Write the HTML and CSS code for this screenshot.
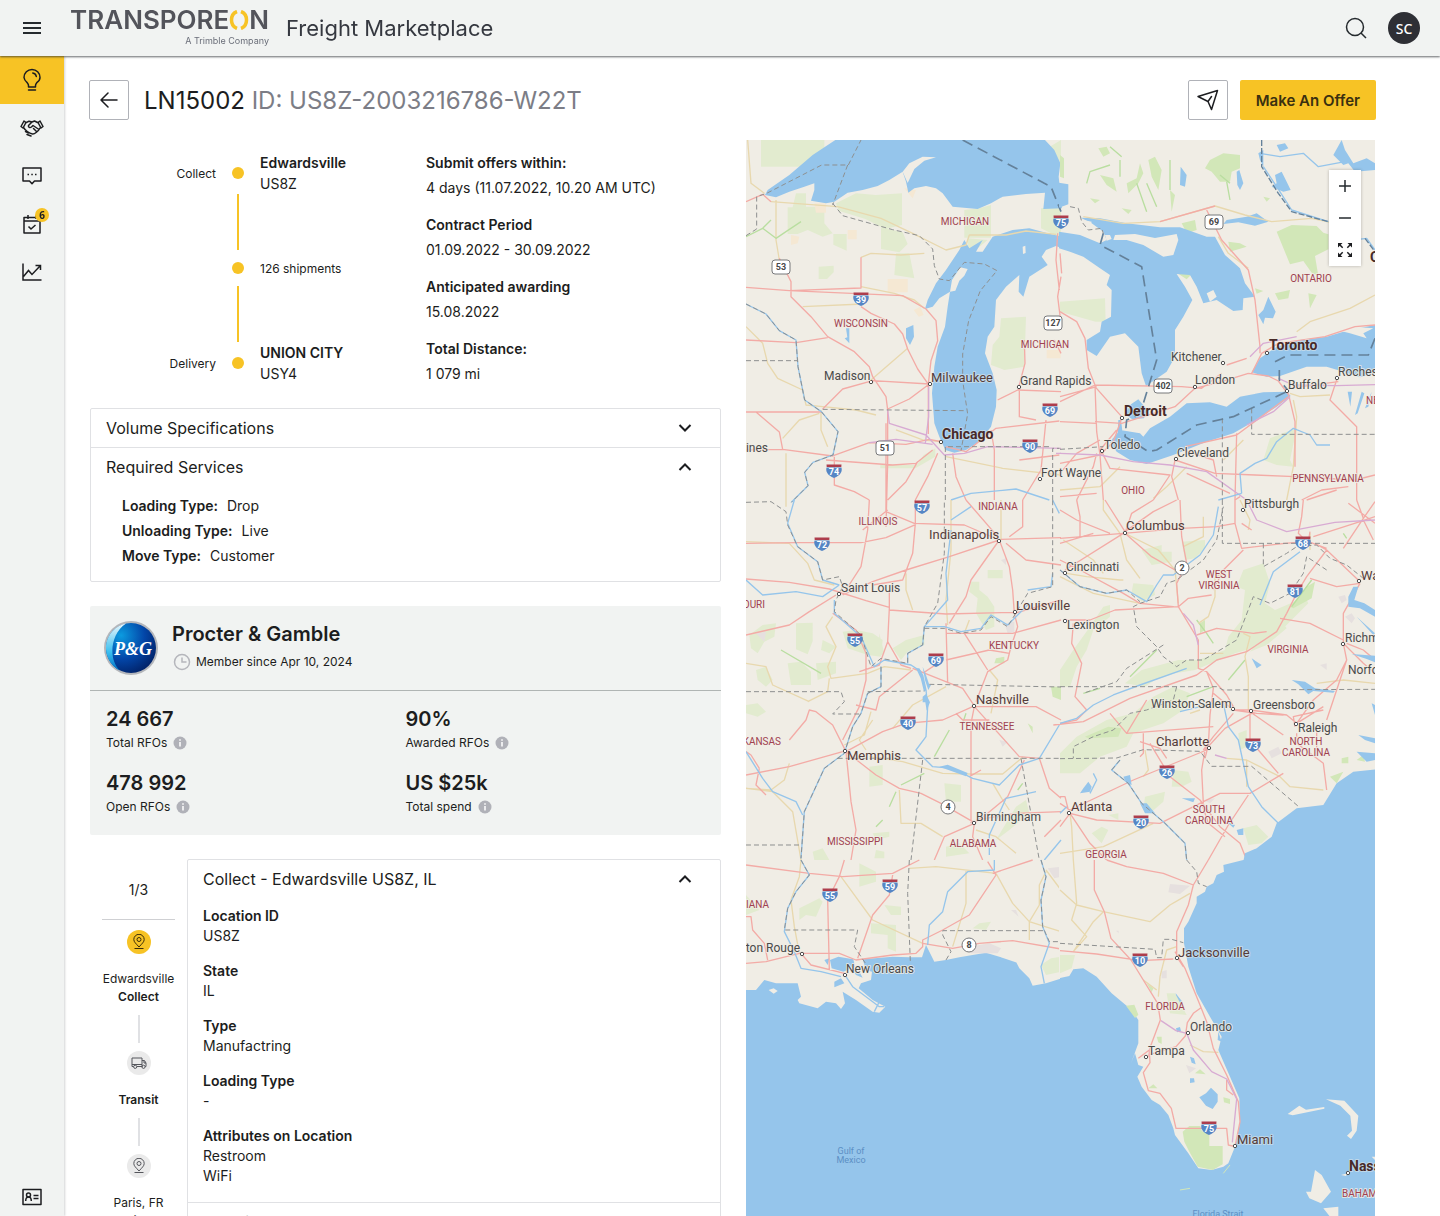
FILE: index.html
```html
<!DOCTYPE html>
<html lang="en">
<head>
<meta charset="utf-8">
<meta name="viewport" content="width=device-width, initial-scale=1">
<title>Freight Marketplace</title>
<link rel="stylesheet" href="styles.css">
</head>
<body>
<div class="app">
  <header class="topbar">
    <button class="icon-btn menu-btn" aria-label="Menu"><svg width="18" height="12" viewBox="0 0 18 12" fill="none" stroke="#252a2e" stroke-width="2"><path d="M0 1h18M0 6h18M0 11h18"/></svg></button>
    <a class="brand" href="#">
      <span class="brand-name">TRANSPORE<svg width="20" height="20" viewBox="0 0 20 20" fill="none" stroke="#f7c325" stroke-width="3.500"><path d="M8 1.500C4 3 2.500 6 2.500 10s1.500 7 5.500 8.500M12 1.500c4 1.500 5.500 4.500 5.500 8.500s-1.500 7-5.500 8.500"/></svg>N</span>
      <span class="brand-sub">A Trimble Company</span>
    </a>
    <span class="product">Freight Marketplace</span>
    <button class="icon-btn search-btn" aria-label="Search"><svg width="22" height="22" viewBox="0 0 22 22" fill="none" stroke="#252a2e" stroke-width="1.500"><circle cx="10" cy="10" r="8.500"/><path d="M16 16l5 5"/></svg></button>
    <button class="avatar" aria-label="Account">SC</button>
  </header>

  <nav class="sidebar" aria-label="Main">
    <a class="nav-item active" href="#" aria-label="Opportunities"><svg width="24" height="24" viewBox="0 0 24 24" fill="none" stroke="#1c1d20" stroke-width="1.500" stroke-linecap="round" stroke-linejoin="round"><path d="M8.500 19v-1.500c0-1.500-.6-2-1.600-3.200A7.200 7.200 0 0 1 4 9.500a8 8 0 0 1 16 0c0 2-.9 3.500-2.900 4.800-1 1.200-1.600 1.700-1.600 3.200V19zM8.500 22h7M12.800 5c2 .3 3.200 1.500 3.500 3.500"/></svg></a>
    <a class="nav-item" href="#" aria-label="Deals"><svg width="24" height="18" viewBox="0 0 24 18" fill="none" stroke="#1c1d20" stroke-width="1.500" stroke-linecap="round" stroke-linejoin="round"><path d="M4 2L1 7.500 3 9 6 3.500zM20 2l3 5.500L21 9l-3-5.500zM5.500 4L9 2.200l3 .8 2.500-1L18.500 4M3.500 8.500C5 11 9 14.500 12.500 15c2 .3 6-3 7.500-6M12 3L8.500 6.500c-.5 2 1.500 2.500 3 1.500L13 6.500l6 4M13.500 9.500l3 3M5.500 12.500l3 1.500M7 15.500l4 1.500"/></svg></a>
    <a class="nav-item" href="#" aria-label="Messages"><svg width="20" height="20" viewBox="0 0 20 20" fill="none" stroke="#1c1d20" stroke-width="1.500" stroke-linejoin="round"><path d="M1 2h18v13h-6.500L10 17.800 7.500 15H1z"/><path d="M5.500 8.500h1.500M9.300 8.500h1.500M13 8.500h1.500"/></svg></a>
    <a class="nav-item" href="#" aria-label="Tasks, 6 open"><svg width="20" height="20" viewBox="0 0 20 20" fill="none" stroke="#1c1d20" stroke-width="1.500" stroke-linejoin="round"><path d="M2 3.500h16V19H2zM2 7h16M6 1v4M14 1v4M6.500 12.500L9 15l4.500-4"/></svg><span class="badge">6</span></a>
    <a class="nav-item" href="#" aria-label="Analytics"><svg width="20" height="20" viewBox="0 0 20 20" fill="none" stroke="#1c1d20" stroke-width="1.500"><path d="M1 1.500V18h18.500M1.500 14.500l5-6 3.500 4L18 4M13.500 3.500h5V8"/></svg></a>
    <a class="nav-item nav-last" href="#" aria-label="Contacts"><svg width="20" height="18" viewBox="0 0 20 18" fill="none" stroke="#1c1d20" stroke-width="1.500" stroke-linejoin="round"><path d="M1 1.500h18v15H1z"/><circle cx="6.500" cy="7" r="2"/><path d="M3.700 13c0-3 1.300-4 2.800-4s2.800 1 2.800 4M11.500 7.500h5M11.500 10.500h5"/></svg></a>
  </nav>

  <main class="main">
    <div class="page-head">
      <button class="square-btn" aria-label="Back"><svg width="18" height="16" viewBox="0 0 18 16" fill="none" stroke="#1c1d20" stroke-width="1.500" stroke-linecap="round" stroke-linejoin="round"><path d="M17 8H1M8 1L1 8l7 7"/></svg></button>
      <h1 class="title">LN15002 <span class="title-id">ID: US8Z-2003216786-W22T</span></h1>
      <button class="square-btn" aria-label="Share"><svg width="22" height="22" viewBox="0 0 22 22" fill="none" stroke="#1c1d20" stroke-width="1.500" stroke-linejoin="round" stroke-linecap="round"><path d="M1 7.500L20.500 1.500 14.500 20.500 11 12.500zM11 12.500l3.500-5"/></svg></button>
      <button class="primary-btn">Make An Offer</button>
    </div>

    <div class="columns">
      <div class="details">
        <section class="summary">
          <div class="route">
            <div class="route-stop"><span class="route-label">Collect</span><i class="dot"></i><span class="route-place"><b>Edwardsville</b><br>US8Z</span></div>
            <div class="route-line"></div>
            <div class="route-stop middle"><span class="route-label"></span><i class="dot"></i><span class="route-note">126 shipments</span></div>
            <div class="route-line"></div>
            <div class="route-stop"><span class="route-label">Delivery</span><i class="dot"></i><span class="route-place"><b>UNION CITY</b><br>USY4</span></div>
          </div>
          <dl class="terms">
            <div><dt>Submit offers within:</dt><dd>4 days (11.07.2022, 10.20 AM UTC)</dd></div>
            <div><dt>Contract Period</dt><dd>01.09.2022 - 30.09.2022</dd></div>
            <div><dt>Anticipated awarding</dt><dd>15.08.2022</dd></div>
            <div><dt>Total Distance:</dt><dd>1 079 mi</dd></div>
          </dl>
        </section>

        <section class="accordion specs">
          <button class="acc-head" aria-expanded="false">Volume Specifications<svg width="16" height="16" viewBox="0 0 16 16" fill="none" stroke="#1c1d20" stroke-width="2"><path d="M2.500 5L8 10.500 13.500 5"/></svg></button>
          <button class="acc-head" aria-expanded="true">Required Services<svg width="16" height="16" viewBox="0 0 16 16" fill="none" stroke="#1c1d20" stroke-width="2"><path d="M2.500 11L8 5.500 13.500 11"/></svg></button>
          <dl class="services">
            <div><dt>Loading Type:</dt><dd>Drop</dd></div>
            <div><dt>Unloading Type:</dt><dd>Live</dd></div>
            <div><dt>Move Type:</dt><dd>Customer</dd></div>
          </dl>
        </section>

        <section class="company">
          <div class="company-head">
            <svg class="company-logo" width="54" height="54" viewBox="0 0 54 54">
              <defs>
                <radialGradient id="pg-ball" cx=".3" cy=".25" r=".85"><stop offset="0" stop-color="#0b9be0"/><stop offset=".55" stop-color="#0346a8"/><stop offset="1" stop-color="#011f63"/></radialGradient>
                <linearGradient id="pg-moon" x1="0" y1="0" x2="0" y2="1"><stop offset="0" stop-color="#eaf6fb"/><stop offset=".6" stop-color="#3cc0f0"/><stop offset="1" stop-color="#0072c6"/></linearGradient>
              </defs>
              <circle cx="27" cy="27" r="27" fill="#b4b6bb"/>
              <circle cx="27" cy="27" r="25" fill="url(#pg-ball)"/>
              <path d="M22 2.500A25 25 0 0 0 16 49.500C5 40 5 14 22 2.500z" fill="url(#pg-moon)"/>
              <text x="29" y="34" class="company-mark">P&amp;G</text>
            </svg>
            <div class="company-title">
              <h2 class="company-name">Procter &amp; Gamble</h2>
              <p class="since"><svg width="18" height="18" viewBox="0 0 18 18" fill="none" stroke="#b5b6bc" stroke-width="1.500"><circle cx="9" cy="9" r="7.500"/><path d="M9 4.500V9h4.500"/></svg>Member since Apr 10, 2024</p>
            </div>
          </div>
          <div class="stats">
            <div><strong>24 667</strong><span>Total RFOs <svg class="info" width="14" height="14" viewBox="0 0 14 14"><circle cx="7" cy="7" r="6.500"/><path d="M7 6v4.500M7 3.300v1.400"/></svg></span></div>
            <div><strong>90%</strong><span>Awarded RFOs <svg class="info" width="14" height="14" viewBox="0 0 14 14"><circle cx="7" cy="7" r="6.500"/><path d="M7 6v4.500M7 3.300v1.400"/></svg></span></div>
            <div><strong>478 992</strong><span>Open RFOs <svg class="info" width="14" height="14" viewBox="0 0 14 14"><circle cx="7" cy="7" r="6.500"/><path d="M7 6v4.500M7 3.300v1.400"/></svg></span></div>
            <div><strong>US $25k</strong><span>Total spend <svg class="info" width="14" height="14" viewBox="0 0 14 14"><circle cx="7" cy="7" r="6.500"/><path d="M7 6v4.500M7 3.300v1.400"/></svg></span></div>
          </div>
        </section>

        <section class="stops">
          <div class="steps">
            <p class="steps-count">1/3</p>
            <span class="step-icon current"><svg width="16" height="16" viewBox="0 0 16 16" fill="none" stroke="#3a2d08" stroke-width="1"><path d="M8 13C5 9.500 2.800 8 2.800 5.500a5.200 5.200 0 0 1 10.400 0C13.200 8 11 9.500 8 13zM3.500 14.500h9"/><circle cx="8" cy="5.500" r="2"/></svg></span>
            <p class="step-text">Edwardsville<br><b>Collect</b></p>
            <i class="step-line"></i>
            <span class="step-icon"><svg width="16" height="14" viewBox="0 0 16 14" fill="none" stroke="#55565c" stroke-width="1"><path d="M2.500 10.500H1V2h10v8.500H6M11 4.500h2.500L15 7v3.500h-.8M11 10.500h.5M1 8.500h10M13 5v2h2"/><circle cx="4.200" cy="10.800" r="1.600"/><circle cx="12.500" cy="10.800" r="1.600"/></svg></span>
            <p class="step-text"><b>Transit</b></p>
            <i class="step-line"></i>
            <span class="step-icon"><svg width="16" height="16" viewBox="0 0 16 16" fill="none" stroke="#55565c" stroke-width="1"><path d="M8 13C5 9.500 2.800 8 2.800 5.500a5.200 5.200 0 0 1 10.400 0C13.200 8 11 9.500 8 13zM3.500 14.500h9"/><circle cx="8" cy="5.500" r="2"/></svg></span>
            <p class="step-text">Paris, FR<br><b>Delivery</b></p>
          </div>
          <div class="accordion">
            <button class="acc-head" aria-expanded="true">Collect - Edwardsville US8Z, IL<svg width="16" height="16" viewBox="0 0 16 16" fill="none" stroke="#1c1d20" stroke-width="2"><path d="M2.500 11L8 5.500 13.500 11"/></svg></button>
            <dl class="location">
              <div><dt>Location ID</dt><dd>US8Z</dd></div>
              <div><dt>State</dt><dd>IL</dd></div>
              <div><dt>Type</dt><dd>Manufactring</dd></div>
              <div><dt>Loading Type</dt><dd>-</dd></div>
              <div><dt>Attributes on Location</dt><dd>Restroom</dd><dd>WiFi</dd></div>
            </dl>
            <button class="acc-head ruled" aria-expanded="false">Transit<svg width="16" height="16" viewBox="0 0 16 16" fill="none" stroke="#1c1d20" stroke-width="2"><path d="M2.500 5L8 10.500 13.500 5"/></svg></button>
          </div>
        </section>
      </div>

      <section class="map" aria-label="Route map">
        <svg class="map-canvas" viewBox="0 0 629 1076" preserveAspectRatio="xMinYMin slice">
          <defs>
            <g id="shield"><path class="shield-blue" d="M-7.500-3.500h15c1 4-1 8-7.500 10.500C-6.500 4.500-8.500.5-7.500-3.500z"/><path class="shield-red" d="M-7.500-6.500h15l-.2 2.500h-14.600z"/></g>
            <g id="plate"><rect class="plate-box" x="-9" y="-7" width="18" height="14" rx="3"/></g>
            <circle id="round-plate" class="plate-box" r="7"/>
            <circle id="town" class="town" r="1.700"/>
          </defs>

          <!-- Upper Midwest -->
          <g transform="scale(.33333)">
            <path class="park" d="M45 0h190v60l-30 20H45zM150 160h30v40h55v50l25 30-30 10-45-20-30 12h-30v-80h15zM270 190l60-30 60 5 78-5v95l-50 12-60-30-80-25zM405 262l65 15 15 35-25 25-55-10zM262 282h40v50l-40-18zM450 340h40l15 75-60-10zM218 380l45-3v20l-20 20h-25zM655 210l45-5 35-10v98h-80zM885 205l60-5v95l-60-30zM765 535l75-5-5 150-60 10-40-15 5-60 20-25zM665 295l60 5-30 25-30 5zM403 975h110l20-30 35-20v25l-60 35H403zM895 30L945 0v70z"/>
            <path class="town-area" d="M205 190h35v28h-30zM305 270h27v28h-27zM135 285l25 5-5 20-20 5zM425 417h60v40h-60zM503 510l20-10 10 25-15 5zM475 145l35 5-10 25zM902 630h42v25h-42z"/>
            <path class="water" d="M57 165L65 150 130 105 200 45 268 0H897L925 30 943 70 938 110 948 205 892 207 897 158 840 162 770 170 735 190 695 207 620 200 590 160 570 145 540 138 505 145 487 158 480 125 470 95 430 120 395 138 350 150 305 158 265 185 240 190 195 182 205 150 205 130 175 140 130 155 90 172z"/>
            <path class="land" d="M470 95l20-25 40-20 40 2-35 10-30 25-20 42z"/>
            <path class="water" d="M655 300L640 330 600 390 570 430 545 480 537 507 560 500 580 475 612 455 605 500 597 560 575 620 565 680 558 760 565 850 580 890 598 930 625 938 660 930 700 905 735 860 750 800 752 750 740 700 717 640 725 590 745 560 750 480 780 440 820 405 818 455 832 470 850 410 905 375 887 350 900 330 930 318 948 325V290L905 280 850 265 800 270 740 290 710 335 690 335 710 300 670 325z"/>
            <path class="land" d="M612 455l6-35 25-38 22 5-10 20-15 15-12 30zM830 320l8-3 1 22-8 3z"/>
            <path class="water" d="M480 565l22-10 2 35-12 25-12-20zM300 565l10 0v45l-14-15 8-3z"/>
            <path class="road-minor" d="M5 0l10 130 40 30M75 185l200 15 130 35 95 45 100 50 60-15 10-30h110l60-12 90 10M90 180v120l10 60M345 352l30-12 90 5 70-5M170 500l180-8M345 440l100 20 60 20 30 25M0 560l50 50 15 60 30 45 75 35 10 45 50 5 100 10 60 15M485 625l-110 95M225 810v60l20 50M450 870l80 30 60 5M120 940v140M600 950l170 35 175 20M220 820l-60 20-50 55"/>
            <path class="road" d="M0 442l130 10 215-8V352M0 185l50-22 25 22M100 355l35 70v45l60 60 50 60 80 45 45 45 10 30 40 60 5 40v160l-5 190M150 608l95-15M0 600l150 8M130 452l340 15 70 40 30 35 5 60-20 60-8 70v150M345 500l30 20 70 32 25 30 15 45 30 60 35 50M380 722l170 10-60 45-65 30M380 722l-90 25-60 60M0 816h225M30 816l70 60 10 52M0 930l110-2 150 20 110-40 110 5 70-15 40 8M240 960l200 15 70-5 50-40M265 950v85l60 20 45 25M515 965l-35 60-55 55M575 940l-30 70-37 70M620 940l10 70 30 70M420 850v230M600 920l60 15 90-70 190-22M735 870l10 60v150M755 780l60-30 130 5M820 745v85l50 10M945 410l-10 60 10 80M935 280l-5 80 10 90M900 840l-15 150-55 90M835 600l2 70-20 75M945 640l-20-40M820 960l120-15"/>
            <path class="road-toll" d="M425 810l5 40 110 35 55 60 60-5 70-20 220 5M370 908l80-10 110 15M548 740v90l-10 80M930 940h15"/>
            <path class="river" d="M0 492l60 30 40 50 50 28 6 80 20 100 50 35 50 60-15 70-60 22-25 30 10 40-50 50M615 1080l60-20 55-5 80-8 100 33"/>
            <path class="trail" d="M0 290l50-25 40 30 30-20 45-30M50 265l25-25"/>
            <path class="border" d="M0 287l32-20V170l30-10 165-85h80L345 0M305 75l-45 120M260 190l30 37 150 42 80 18 40 40 5 50 15 40 30 5 45-55 60 5 38 20-50 60-35 90-18 100v80l15 100-20 110M0 662h155M0 492l60 30 40 50 50 28 6 80 20 100 50 35 50 60-15 70-60 22-25 30 10 40-50 50M230 808l425 4M598 1080V920h320M920 1080V925h20"/>
            <path class="border-wide" d="M650 0l245 130 20 10 30 75"/>
          </g>

          <!-- Great Lakes east -->
          <g transform="translate(314 0) scale(.33333)">
            <path class="forest" d="M650 275l45-20 75 3 20 20 15 5v45l-40 20 10 60-20-10-25-35-40 10zM365 250l40-10 5 30-30 10zM350 398l45 5-15 15zM450 60l40-20 50 5v40l-25 10-5 30-30 0-25-30-20-10zM505 305l35 5 20 10-50 15zM745 460l25 5-20 40zM645 460l45-10-5 25-30 5zM585 445l25 8-20 8zM200 130l30-15 10-45 10 30-15 30-30 30zM265 60l20-10 20 40-10 60-20-40zM330 150l15 15-10 50zM120 105l40 10 10 40-30-20zM90 175l30 5-15 10zM115 25l25-5 10 20-20 10zM0 45l12 10v60l-12-5zM185 205l30 5-10 12zM610 170l20 5-10 10z"/>
            <path class="park" d="M0 485l135-10 2 70-30 0-107-30zM610 960l20-65 50-20 30-10-20 95 10 20-50-5z"/>
            <path class="trail" d="M510 130l-30-25M150 20l35 30M180 60v50M330 60v90M230 130l30 85M260 130l30 70M500 125l10 55M80 130l10-35 60-20"/>
            <path class="water" d="M-3 128l28 5v60l-28 10zM-3 275L60 285 120 310 140 300 130 275 95 250 62 233 120 235 200 250 300 262 360 262 440 290 465 290 495 345 540 385 555 430 585 470 550 475 548 510 520 513 470 480 430 490 410 440 390 405 350 402 375 440 397 480 370 530 345 570 345 650 320 695 258 738 245 700 235 620 195 580 150 590 110 648 80 630 80 600 120 575 125 545 153 530 155 450 140 435 150 405 120 385 70 350 30 335 -3 325z"/>
            <path class="land" d="M165 285l60-3 60 12 65-12 5 18-15 45-30 5-60-35-50-15-40 0zM70 240l25 5-5 20-20-5zM135 285l15 0 5 12-15 5zM440 460l20-10 10 20-20 15z"/>
            <path class="water" d="M595 525l15-15 15-40 22 45-8 20-24-2-5 20zM575 697L600 655 650 620 720 600 800 590 860 572 945 555V700L900 712 860 698 800 680 740 680 660 708 620 710zM150 905L180 870 240 880 250 890 270 865 330 830 380 790 450 787 500 800 540 770 610 757 680 755 692 768 650 800 580 845 520 880 440 905 340 945 260 972 210 960 170 935zM213 793l22-15 27 32-10 25-35 3-22-15zM175 840l8 0 5 40-15 0zM500 240l60-10 30-10 35 25-40 12-50-10-45 5zM595 40l15-10v50l-10-20zM645 105l20-10 15 30 12 25-22 5-35-15 15-10zM362 80l18 25-5 35-15-5zM530 95l8-5 12 40-10 20-8-15zM650 15l25-5 10 15-25 10zM820 45l25-45 10 30 25 40 40-15 25 15v20l-60 5-20-25-15 5zM863 755l8 45 5-45zM905 755l-20 70 8-5 20-60zM935 755l-20 50 10-5z"/>
            <path class="land" d="M830 570l50-10 60 5-30 15 10 15-50-15z"/>
            <path class="road-minor" d="M70 230l120 20 110-5 165-47 90 27 80 20 120-10 70 15M475 290l30 50 60 45M710 575l40-30 120-40 75-40M690 760l30 10 90-5M700 780l10 50-10 150-20 100M0 1050l120-10 60-60M380 980l-60 60-40 35M490 960l60-60"/>
            <path class="road" d="M300 245l165-47M440 210l20 40 25 50 80 90 20 90 15 140 0 20M575 700l30-60 50-30 140-20 90-30 60-5M565 700l60 8 30 15 30 40M565 700l-80 25-80 20-60 55-160 50-80-5M500 675l60-20M485 700l-60 45-60-5-260-5M0 340l5 60M0 515l50 30 25 50 10 90 20 50 5 140 10 70M105 735l-105 50M0 770l110-30M105 740l80 90M0 845l110 5M185 835l-25 70-40 40 10 135M120 945L0 970M0 1000l50-60 70-40M170 870l-50 60M110 940l-10 40-50 100M125 935l25 50 180 20-50 75M345 960l-10 50 20 70M345 960l120 40 120 5 120 5 180 10 60-15M375 920l155-35 155-115M370 930l90 30 10 50M530 880l-5 200M685 760l20 85v135M830 720l-20 60 30 30 50 50v220M835 725l-150 20M0 1070l110-10M380 1000l130 60M725 1080l60-30 80-10M740 1080l90-30"/>
            <path class="road-toll" d="M0 940l120 5 100 20 110 10 110 20 120 85M570 650l40-40 100-20M655 715l45 20 130 2 115-3M690 770l-50 45-80 40"/>
            <path class="river" d="M945 330l-25-35-40 5M600 40l60 10 70-10 45 40 80-15M545 1060l-70 20M545 1060l-5-60 45-30 35-15 30-50 50-40 50 20 20 30 40 0M610 80l40 60 45 70 110 35"/>
            <path class="border-rail" d="M605 0v80l50 80 40 55 110 30M915 295l30 40"/>
            <path class="border" d="M30 200l25 5 10 40 20 25 40-5 5 15M0 928l130-8M575 805v78h370M487 835v245"/>
            <path class="border-wide" d="M130 280l-10 35 125 65 45 280-40 130-25 40-25 10-5 50 70 45 25-5 120-75 110-25 160-75M645 665l40-20h240l20-50M658 690v30l25 30"/>
          </g>

          <!-- Mid-South -->
          <g transform="translate(0 360) scale(.33333)">
            <path class="park" d="M150 370l50-2v55l-15 40-35-15zM290 395l40-5 50 10 30 20-5 50-40-5-60-20zM400 400l15 60-15 10zM440 445l40-25 55-15v30l-50 20-20 25zM230 420l20 10 20 10-20 20-25-10zM125 490l40-5 30 30v40l-60 0zM210 490l60-5v35l-55 20zM30 510l30-10 20 40-20 20-25-20zM10 405l40-30 40-5-5 40-30 15-20 35-20-15zM0 615l35-5 25 25-25 15-35-10zM675 245l25 0v25l25 20 20 30v60l-25 10-30-50 5-45-25-20zM725 210l45 0v25l-45 0zM370 800l40-5v60l-40 5zM595 850l50 5v50l-45 0zM750 1020l60-100 30-20 10 40-60 50zM600 1040l40-10 30 30-70 10zM200 1055l30-10 20 35h-45zM380 1000l50-5v15l-40 10zM390 1050l25 5v20h-30z"/>
            <path class="forest" d="M750 475l25-5v20h-30zM845 670l15 10 0 20zM915 560l30 0v40l-25-10z"/>
            <path class="town-area grey" d="M30 400l30-5-5 30zM775 370l30-5v30l-20 5zM760 720l25 5-15 15zM765 180l15-5v20z"/>
            <path class="trail" d="M105 450l120 70M610 690l-45 80M535 820l-70 35M450 875l-20 45M660 640l-10 30M410 960l-20 20M830 850l-15 20"/>
            <path class="road-minor" d="M120 0v20M0 125l130 5 55 60 20 50 60 15M480 220l0 50 20 60M615 0l0 150-15 150 5 75M260 350l-20 30 30 60-25 60 10 35 110-15 50-20 80 10M0 490l60 10 20 55 110 50M250 535l-5 40-60 30M440 685l60-70 100-55M375 635l-20 70-60 30M730 510l25 30-20 100M360 750l-20-30 40-60M370 770l100 15 120 35 80 2 100 0 60-50M130 790l-15 50-40 30-75-5M0 865l80 10 60 60 25 145M460 870l5 100 60 0 65 40M740 850l30 50 20 30M690 990l60 20 60 50M765 0v120M670 360l-15 40"/>
            <path class="road" d="M0 130l150-2 195 0M345 128l75-15 90-40M370 0l-5 90-20 110-55 85M420 0v35l85 35 150 5 105 45M508 0v70l-8 90-30 80-90 15M350 90L425 30M0 237l130 10 120 20 110 35 70 20M660 0l95 110M290 285l90-40 100-35 130-40 150-50M760 120l-85 120-15 50-50 80M760 120l30 80 10 70 5 70M780 130l60 50 105 15M765 118l180-5M830 0v80l-40 30M430 275v50l-5 100-25 70-60 20M430 330l170 12 205-5M805 340l140-40M805 340l10 40-20 60-10 40-60 35-35 90M0 405l130-30 60-40 80-50M260 340l70 50 30 70v80l-20 80-50 100M425 425l40 70 30 10M600 370l5 180M600 400l55 0 70 110M655 400l145 0 145-40M500 505l150 60 40 60M530 520l60-40M500 510l-100 80-10 40-60-15M600 480l130-30 60 10M300 755l110-60 70-25 110-10 90-40M685 620l-10 50 0 300M690 620l90 0 90 0 75 40M630 640l20 20 80 0M690 625l130 145M300 755l-40-80-50-40-20-5-10 30-50 60M0 825l130-25 160-45M40 805l-10 50 30 30M0 755l15 10 25 40M300 755l15 150 15 85-15 90M300 755l90 70 70 40 65 15 60 30 95 55M685 970l-90 40-30 70M685 970l40-30 60-50 50-110M685 970l-5 40 30 70M690 960l120-20 135-5M670 830l35-20M820 770l60 5 30 90 35 30M895 1010l50-50"/>
            <path class="river" d="M145 0l-20 70 30 70 60 45 15 55 50 15M0 240l50 45 100-10 80 15 50-35M265 300l0 40 80 70 40 90 30-20 80 15 30 20M485 490l0-30 45-25 5-55 70-80-5-80 15-130M615 60l60-40M535 380l60 0 50 15 60-10 30-40 50 30 60-60M405 500v60l-40 20-20 60-25 40-25 80-60 45-60 130-10 140M540 570l5 50-5 90-30 40 50 50 60 5 60 30 80 20 60-60 60-20 60-100M0 755l50 80 30 40 70 30 20 40M870 875l-90 20-50 110 0 60M895 1080l50-60M920 0l20 40M845 270l70-10 5-40"/>
            <path class="water" d="M510 505l10 0 12 20 10 45-8 5-10-40zM530 500l10 25 10 30 5 0-8 15-10-30zM530 590l10-8 12 25-10 25-4-25-8 0zM580 800l25-6 60 25-5 10z"/>
            <path class="border" d="M0 7l75-2 45 30 5 40 30 65 60 45 15 55 50-10 10 30-20 40-5 35 80 70 30 95 30-25 80 15 0-30 45-25 5-55 40-70 20-150V0M535 385l60 0 50 15 60-10 30-40 50 30 60-100 75-20V0M0 575h285l10 30-35 37h85M365 575l170-2M550 553l395 8M405 500v60l-40 20-20 60-25 40-25 80-60 45-60 130-10 140M275 775l670 0M530 780l-35 300M825 775l55 305M0 1035h160"/>
          </g>

          <!-- Appalachia and the Carolinas -->
          <g transform="translate(314 360) scale(.33333)">
            <path class="park" d="M505 410l40-50 10-90-25-10 20-50 60-20 20 60-15 60 30 20 70-30 20-10 10 20-60 60-60 60-100 30-120 50-60 10-60 20-30 20-60-10 50-40 110-30 60 0 80-30zM0 510l40-60 50-70 40-60 20-5v35l-50 40-20 60-30 50-20 60-30 0zM0 760l50-50 90-50 80-20 60-50 60-30 50 20-20 50-60 40-90 30-20 40-80 30-60 50-60 0zM245 150l60-15v20l30 0v30l-60 10zM365 125l70-5v25l-30 30-30 5zM220 250l60 5 5 30-40 20-30-30zM620 400l50-30 10 15-60 50-50 20zM340 810l45 5 10 30-30 15-30 0zM255 890l60-15-5 30-40 35-20-10zM550 985l40-10 35 35-20 20-40 5zM535 700l25-10v50l-20 10zM95 1000l30-20 20 10-20 40zM145 945l30-5v20z"/>
            <path class="forest" d="M75 710l70-30 40 5-10 25-90 5zM420 370l15-10v30l-15 10zM690 320l50-60 25-15-10 50-55 30zM845 775l20-5v20h-20zM890 780l20-15 5 20zM810 830l40-15-20 35z"/>
            <path class="town-area grey" d="M625 755l30-15 10 20-30 15zM835 290l20-5 5 15-15 10zM855 350l20-10 10 15-10 15zM780 495l20-5v20zM430 900l35-5-15 15z"/>
            <path class="trail" d="M410 360l30 40 20 30M505 540l50-60M380 590l80-30M210 530l80-80M695 320l60-80M850 100l10 15M70 580l50-15"/>
            <path class="road-minor" d="M130 0l0 30 50 70 20 80 40 55M130 220l-30-40-90-60M390 640l30-10M20 220l60 10 100 10 10 0M0 230l100 50 140 30M195 100l100 50 50 60 10 100M465 230l0 60-20 60-30 20M420 460l70 0M550 400l20 10-15 60 10 60 0 100M430 50l0 60-60 30M770 550l80-10 95 10M500 775l60 5 100 50 30 30 100 10M560 780l0 80M0 1060l130-20 150-70M40 1080l-5-100-5-40M750 100l0 50M540 0l30 60-5 30M255 750l10 60-15 20M470 230l30-20"/>
            <path class="road" d="M0 115l190-15 175-15 105-5 55-10M195 95l-60-95M190 100L15 210M195 100l20-60 65-40M195 100l80 70 70 40M195 95l85-60 70-35M50 0l10 50 0 60M0 130l100-30M0 180l60 30 130 70 50 30 100 10M360 0l5 110 15 80-30 60 5 70M355 320l-190 10-75 30-75 0M355 320l30-25 70-10M0 30l50 30 100 40M550 150l-60 60-30 60M525 0l0 70 20 75 130-15 60-5M545 70l30 20M525 0l15-10M750 95l-5 30 55 20M735 120l-20-20 10-50 5-50M760 110l140-45 45-15M765 130l35 20-60 80-30 50-30 60-30 55-90 60-90 25-60 45-200 70-140 70-90 10M800 150l100 95M750 235l80 25 70-10M900 250l-50 90 0 90 10 50-30 60-70 60-50 70M660 355l90 15 100 50M860 480l-40 120-20 60M850 430l60 60 35 30M860 430l50 20 35 30M355 320l60 100 0 80M410 405l60-20 110 15 40-5M415 465v40l25 10 20 50-10 80-5 90-10 40M440 515l60 70 20 35M460 580l60 50 50 0M570 630l0 90 25 30 60 70M570 630l110 15 30 25M570 635l100 70M520 630l70 10 80 5M710 670l80-50M520 640l-60 70-30 40M575 640l-80 45-60 65M705 680l-5-30 90-20M710 700l0 30 80 60 10 80M770 680l0 70M40 370l-5 60 30 60-20 100 35 40-30 30-50 10M150 640l50 60 260-20M200 700l60-100M250 700l0 60-10 10M435 750l-10 60 5 100M320 775l-20-30-60-20M0 910l30 20 190-90 220-90M30 940l80 20 190 10 120-60 60-30 90 0 100-60M270 730l60 100 90 70 60 80 60 50 20 50M425 910l20 60 50 40M565 885l-60 90-60 105M30 940l60 90 50 50M25 930l-10-40-15 0M0 980l30-40M865 10l80 60M910 55l-60 90M910 55l35-50M910 60l30 60M890 0l20 55"/>
            <path class="road-toll" d="M560 0l30 60 90 35 145-28 120-7M370 340l30 35 15 60M465 765l35 10"/>
            <path class="river" d="M0 210l60 50 80 20 60-10 60 35 30-50 20-30 30 0 80-60 40-60 15-85M380 505l-140 50-80 30-60 30-50 40-50 15M720 155l-80 60-40 100M490 610l15 70 30 40 30 140 40 60 50 50-15 50M100 820l10 20-20 40M360 635l100-25M0 940l20-20M180 780l-25 30 50 40 40 60 70 60 60 60 5 50"/>
            <path class="water" d="M880 260l15 0-12 40 30 10 32 20v20l-45-25-35-5 0-30zM890 350l55 50-5 5zM875 462l70 5v20l-25-10zM575 475l30 20-15 10zM695 540l40 5 30 20 60 8-5 5-60-5-15 10-30-30zM895 705l50 10v15l-30-10zM890 755l55 5v20l-25 5zM935 610l10 5v30zM60 880l10-15 15-20 10 15-5 15zM240 910l20 0 25 30-30 0zM530 990l20-5 0 20-15 0zM500 965l25 10-5 8zM365 895l40 0-5 12zM190 830l20-5 5 30-15-5zM948 808L880 815 830 850 790 915 710 925 650 970 635 1010 590 1045 555 1060 550 1084H948z"/>
            <path class="border" d="M487 0v130h458M610 130v70l70-40 30-20 60-5 40 40 50 20 50 40M800 210l-60-40-10 50-40 60-60 30-50-20-50 130-100 60-50 0-30 20-40-30-20-30-60-60-10-60 20-10 60-20 20-40 30-10 80-60 40-60 20-100M310 435l-110 70-30 40-100 35M0 560l470 0 20 10 455-2M350 560l-10 40-80 30-50 10-50 50-60 20-60 30v35M0 776l170-2 80-25 170 5 35 45 120 0 140 120M180 780l-25 30 50 40 40 60 70 60 60 60 5 50M0 210l60 50 80 20 60-10 40 35"/>
          </g>

          <!-- Gulf coast -->
          <g transform="translate(0 720) scale(.33333)">
            <path class="water" d="M0 230H945V1071H0z"/>
            <path class="land" d="M0 0H948V355L900 370 860 377 850 355 820 325 810 305 825 312 760 290 720 278 640 292 600 300 565 305 555 285 540 255 528 292 490 292 440 290 350 298 360 330 378 335 375 360 345 370 338 385 380 420 418 440 400 458 380 455 330 420 290 395 297 430 285 447 270 430 240 425 215 445 160 430 155 420 165 410 155 370 130 370 90 370 55 360 30 390 0 390z"/>
            <path class="water" d="M252 300l25-10 45 8 5 22-35 15-35-10zM235 300l15-5-5 20zM265 365l20-10 10 15-30 12zM340 335l-20-5 10 15 20 8z"/>
            <path class="land" d="M68 390l15-5 12 8-12 8z"/>
            <path class="park" d="M160 145l60-30 10 10-20 45-30-5-20 15zM340 10l50 25v30l-50 15zM415 135l50 5v25h-30zM375 190l75 5v80l-25-10v-40l-50-5zM700 190l35-5-15 25-40-5zM885 315l30-20 30-5v45l-45 10zM0 105l40 45-40 15z"/>
            <path class="town-area grey" d="M670 260l60-10 35 15-10 15-80 0zM795 150l15 0 8 20zM905 25l40-5v30l-20 5z"/>
            <path class="road-minor" d="M165 0l-5 50-25 70 10 80 15 80M285 50l95 130 150 70M490 25l80-5 180 20M660 30l0 100-40 130M750 40l50 90 50 55 95 30M850 185v55M850 185l30-50 0-60 20-40M945 90l-45-60"/>
            <path class="road" d="M0 15l190 25 100 10 150-10 80-40M295 0l-15 50-35 70 5 210M440 45l-10 60-50 60-45 130M0 310l60-5 100-25 120 0 50 20 110-15 70-5 20-20 0-20 60-30 80-45 80-120-25-40M530 250l90 15 80-15 100-8 145 25M740 40l60-20 60-20M165 280l30 35 100 25M0 170l15 0 5 40 35 40 10 50"/>
            <path class="river" d="M165 0l25 45-40 50-25 50-10 70 30 60 20 50 60 10 60 15M300 350l20 30 80 60 15 0M400 425l-15 30M885 0l15 50-15 70 5 80 20 50-25 70 10 50M745 0l0 30-80 5-60 60-15 60-40 40-5 60"/>
            <path class="border" d="M165 0l25 45-40 50-25 50-10 65h220l-10 50 40 60M490 0l-5 100 8 205M600 300l15-25-25-50v-13h305M885 0l15 50-15 70 5 80 20 45h35"/>
          </g>

          <!-- Florida -->
          <g transform="translate(314 720) scale(.33333)">
            <path class="water" d="M3 0H948V1071H0V300z"/>
            <path class="land" d="M-3 0H550L490 15 492 35 470 45 460 70 440 80 435 95 410 110 410 130 385 185 372 205 372 250 385 320 410 400 450 470 485 530 475 570 510 650 538 715 540 790 525 860 505 910 490 920 455 930 415 925 385 880 345 825 340 805 325 765 300 735 275 720 245 680 232 650 250 620 235 615 225 580 213 610 235 550 235 480 215 450 155 400 110 350 70 325 40 328 28 348-3 355zM683 762l35-25 20 12 55-8v5l-95 20zM798 718l55 4 42 45-5 45-17 25-12-10 15-15-5-45-30-30zM765 930l20 15 28 50-30 35-35-15-10-20 15 0zM790 1045l45-5v30h-25zM843 945l20-5-5 8zM935 890l10 0v10z"/>
            <path class="water" d="M418 712l20-12 15-17 20 20 0 22-15 22-20-10zM390 590l12 5 5 18-12-5zM390 655l12 0 2 12-14 2zM348 505l12-4 3 12-12 4zM347 400l20 25 0 15-20-15zM475 515l10 30-12-5z"/>
            <path class="park" d="M0 285l45 0-10 40-35 15zM320 400l25 0 35 65-50-5z"/>
            <path class="forest" d="M388 798h33l5 15 22 10v35h40l0 55-30 17-45-10-25-45-15-30-5-30zM198 437l25-3 12 30-10 10zM265 685l15-12 12 12zM290 530l15 0v22l-10-5zM405 640l15-12 17 15zM490 712l20 5v15l-18-5zM260 370l20 15-5 12z"/>
            <path class="town-area grey" d="M330 72l60 5-30 25-35-5zM305 335l15-5v25l-15 0zM378 615l30 10-20 15zM168 212l8 0v8z"/>
            <path class="road-minor" d="M40 0l10 130-15 50 45 50-40 45M0 90l50 45 80 20 140 30 60-50 60-35M130 155l-30 30-60 90M295 410l5-60 20-80 30-10M250 360l40 30M390 555l40 20 45 2"/>
            <path class="road" d="M103 0v90l30 65 20 80 60 65 80 130 8 50-30 80-5 30M140 0l60 20 110 20 90 35 45-75M400 75l-15 60-35 80 0 75M0 272l110 10 130 20 100-5M345 275l30 50 45 110 20 50 20 80 40 80 35 80 5 60-15 75-20-5-5-50H348L334 745 300 700 265 692 250 638 270 608 268 570 235 595M268 584l80-24 28-32 6-40 18-28 22-16M350 290l20 30M500 660v30l20 15"/>
            <path class="road-toll" d="M303 482l45 30 32 8 20 50 55 65 45 22 30 60-8 80-5 50"/>
            <path class="border" d="M0 250l285 18 5 25h15l5-55 25 0 35 10M380 0l30 35 5 35 25 10"/>
            <path class="bank" d="M490 940l20-25M360 990l30-5"/>
          </g>

          <g transform="translate(-746 -140)">
            <g>
              <use href="#shield" x="1061" y="222"/><use href="#shield" x="861" y="299"/><use href="#shield" x="1050" y="410"/><use href="#shield" x="1030" y="446"/><use href="#shield" x="834" y="471"/><use href="#shield" x="922" y="507"/><use href="#shield" x="822" y="544"/><use href="#shield" x="855" y="640"/><use href="#shield" x="936" y="660"/><use href="#shield" x="908" y="723"/><use href="#shield" x="1303" y="543"/><use href="#shield" x="1295" y="591"/><use href="#shield" x="1253" y="745"/><use href="#shield" x="1167" y="772"/><use href="#shield" x="1141" y="822"/><use href="#shield" x="890" y="886"/><use href="#shield" x="830" y="895"/><use href="#shield" x="1140" y="960"/><use href="#shield" x="1209" y="1128"/>
              <use href="#plate" x="781" y="267"/><use href="#plate" x="1053" y="323"/><use href="#plate" x="885" y="448"/><use href="#plate" x="1214" y="222"/><use href="#plate" x="1163" y="386"/>
              <use href="#round-plate" x="1182" y="568"/><use href="#round-plate" x="948" y="807"/><use href="#round-plate" x="969" y="945"/>
            </g>
            <g class="num-light">
              <text x="1061" y="226">75</text><text x="861" y="303">39</text><text x="1050" y="414">69</text><text x="1030" y="450">90</text><text x="834" y="475">74</text><text x="922" y="511">57</text><text x="822" y="548">72</text><text x="855" y="644">55</text><text x="936" y="664">69</text><text x="908" y="727">40</text><text x="1303" y="547">68</text><text x="1295" y="595">81</text><text x="1253" y="749">73</text><text x="1167" y="776">26</text><text x="1141" y="826">20</text><text x="890" y="890">59</text><text x="830" y="899">55</text><text x="1140" y="964">10</text><text x="1209" y="1132">75</text>
            </g>
            <g class="num-dark">
              <text x="781" y="270">53</text><text x="1053" y="326">127</text><text x="885" y="451">51</text><text x="1214" y="225">69</text><text x="1163" y="389">402</text><text x="1182" y="571">2</text><text x="948" y="810">4</text><text x="969" y="948">8</text>
            </g>
            <g>
              <use href="#town" x="871" y="382"/><use href="#town" x="930" y="384"/><use href="#town" x="941" y="442"/><use href="#town" x="1019" y="387"/><use href="#town" x="1040" y="479"/><use href="#town" x="1223" y="363"/><use href="#town" x="1267" y="353"/><use href="#town" x="1195" y="387"/><use href="#town" x="1287" y="391"/><use href="#town" x="1337" y="378"/><use href="#town" x="1122" y="418"/><use href="#town" x="1102" y="451"/><use href="#town" x="1176" y="459"/><use href="#town" x="1243" y="510"/><use href="#town" x="1125" y="533"/><use href="#town" x="999" y="541"/><use href="#town" x="1065" y="573"/><use href="#town" x="839" y="594"/><use href="#town" x="1015" y="612"/><use href="#town" x="1065" y="621"/><use href="#town" x="974" y="706"/><use href="#town" x="845" y="751"/><use href="#town" x="1359" y="581"/><use href="#town" x="1343" y="644"/><use href="#town" x="1233" y="709"/><use href="#town" x="1251" y="711"/><use href="#town" x="1296" y="724"/><use href="#town" x="1209" y="748"/><use href="#town" x="1069" y="813"/><use href="#town" x="974" y="823"/><use href="#town" x="802" y="954"/><use href="#town" x="845" y="975"/><use href="#town" x="1177" y="958"/><use href="#town" x="1188" y="1033"/><use href="#town" x="1146" y="1057"/><use href="#town" x="1235" y="1146"/><use href="#town" x="1348" y="1173"/>
            </g>
            <g class="state">
              <text x="965" y="225">MICHIGAN</text><text x="861" y="327">WISCONSIN</text><text x="1045" y="348">MICHIGAN</text><text x="1311" y="282">ONTARIO</text><text x="1328" y="482">PENNSYLVANIA</text><text x="1133" y="494">OHIO</text><text x="998" y="510">INDIANA</text><text x="878" y="525">ILLINOIS</text><text x="1219" y="578">WEST</text><text x="1219" y="589">VIRGINIA</text><text x="1014" y="649">KENTUCKY</text><text x="1288" y="653">VIRGINIA</text><text x="987" y="730">TENNESSEE</text><text x="1306" y="745">NORTH</text><text x="1306" y="756">CAROLINA</text><text x="1209" y="813">SOUTH</text><text x="1209" y="824">CAROLINA</text><text x="855" y="845">MISSISSIPPI</text><text x="973" y="847">ALABAMA</text><text x="1106" y="858">GEORGIA</text><text x="1165" y="1010">FLORIDA</text>
              <text class="from" x="1366" y="404">NEW YORK</text><text class="to" x="765" y="608">MISSOURI</text><text class="to" x="781" y="745">ARKANSAS</text><text class="to" x="769" y="908">LOUISIANA</text>
              <text class="from" x="1342" y="1197">BAHAMAS</text>
            </g>
            <g class="city">
              <text x="824" y="380">Madison</text><text x="1020" y="385">Grand Rapids</text><text x="1041" y="477">Fort Wayne</text><text x="1171" y="361">Kitchener</text><text x="1195" y="384">London</text><text x="1288" y="389">Buffalo</text><text x="1338" y="376">Rochester</text><text x="1104" y="449">Toledo</text><text x="1177" y="457">Cleveland</text><text x="1244" y="508">Pittsburgh</text><text x="1066" y="571">Cincinnati</text><text x="841" y="592">Saint Louis</text><text x="1067" y="629">Lexington</text><text x="1345" y="642">Richmond</text><text x="1348" y="674">Norfolk</text><text x="1151" y="708">Winston-Salem</text><text x="1253" y="709">Greensboro</text><text x="1298" y="732">Raleigh</text><text x="976" y="821">Birmingham</text><text class="to" x="800" y="952">Baton Rouge</text><text x="846" y="973">New Orleans</text><text x="1190" y="1031">Orlando</text><text x="1148" y="1055">Tampa</text><text class="to" x="768" y="452">Des Moines</text>
            </g>
            <g class="city dark">
              <text x="931" y="382">Milwaukee</text><text x="929" y="539">Indianapolis</text><text x="1126" y="530">Columbus</text><text x="1016" y="610">Louisville</text><text x="976" y="704">Nashville</text><text x="847" y="760">Memphis</text><text x="1156" y="746">Charlotte</text><text x="1071" y="811">Atlanta</text><text x="1178" y="957">Jacksonville</text><text x="1237" y="1144">Miami</text><text x="1361" y="580">Washington</text>
            </g>
            <g class="city major">
              <text x="942" y="439">Chicago</text><text x="1124" y="416">Detroit</text><text x="1269" y="350">Toronto</text><text x="1349" y="1171">Nassau</text><text x="1370" y="262">Ottawa</text>
            </g>
            <g class="sea">
              <text x="851" y="1154">Gulf of</text><text x="851" y="1163">Mexico</text><text x="1218" y="1217">Florida Strait</text>
            </g>
          </g>
        </svg>
        <div class="map-controls">
          <button aria-label="Zoom in"><svg width="12" height="12" viewBox="0 0 12 12" stroke="#252a2e" stroke-width="1.500"><path d="M0 6h12M6 0v12"/></svg></button>
          <button aria-label="Zoom out"><svg width="12" height="12" viewBox="0 0 12 12" stroke="#252a2e" stroke-width="1.500"><path d="M0 6h12"/></svg></button>
          <button aria-label="Full screen"><svg width="14" height="14" viewBox="0 0 14 14" fill="#1c1d20" stroke="#1c1d20" stroke-width="1.500"><path stroke="none" d="M0 0h4.500L0 4.500zM14 0H9.500L14 4.500zM0 14h4.500L0 9.500zM14 14H9.500L14 9.500z"/><path d="M2 2l2.700 2.700M12 2L9.300 4.700M2 12l2.700-2.700M12 12L9.300 9.300"/></svg></button>
        </div>
      </section>
    </div>
  </main>
</div>
</body>
</html>
```
FILE: styles.css
```css
* { box-sizing: border-box; }

body {
  margin: 0;
  font-family: Inter, "Liberation Sans", sans-serif;
  font-size: 14px;
  color: #1c1d20;
  background: #fff;
}

h1, h2, p, dl, dd { margin: 0; }
button { font: inherit; color: inherit; background: none; border: 0; padding: 0; cursor: pointer; }
a { color: inherit; text-decoration: none; }
svg { display: block; flex: none; }
b, dt { font-weight: 600; }

.app {
  display: grid;
  grid-template: 56px minmax(0, 1fr) / 64px minmax(0, 1fr);
  height: 100vh;
}

/* Top bar */
.topbar {
  grid-column: 1 / -1;
  z-index: 2;
  display: flex;
  align-items: center;
  padding-right: 20px;
  background: #f1f3f2;
  box-shadow: 0 1px 2px rgba(37, 42, 46, .7);
}
.icon-btn { display: flex; align-items: center; justify-content: center; height: 40px; }
.menu-btn { width: 64px; }
.brand { display: flex; flex-direction: column; align-items: flex-end; margin-left: 4px; padding-bottom: 6px; width: 201px; }
.brand-name {
  display: flex;
  align-items: center;
  font-size: 26px;
  line-height: 32px;
  font-weight: 600;
  color: #53545b;
}
.brand-sub { font-size: 9px; line-height: 10px; color: #6a6e79; }
.product { margin-left: 17px; font-size: 22px; color: #353840; }
.search-btn { width: 40px; margin-left: auto; }
.avatar {
  width: 32px;
  height: 32px;
  margin-left: 12px;
  border-radius: 50%;
  background: #2e2f35;
  color: #fff;
  font: 500 14px "Noto Sans", sans-serif;
}

/* Side navigation */
.sidebar {
  z-index: 1;
  display: flex;
  flex-direction: column;
  background: #f1f3f2;
  box-shadow: 1px 0 2px rgba(37, 42, 46, .2);
}
.nav-item { position: relative; display: flex; align-items: center; justify-content: center; height: 48px; }
.nav-item.active { background: #f7c325; }
.nav-last { margin-top: auto; height: 38px; }
.badge {
  position: absolute;
  top: 8px;
  right: 15px;
  width: 14px;
  height: 14px;
  border-radius: 50%;
  background: #f7c325;
  font: 700 10px/14px "Noto Sans", sans-serif;
  text-align: center;
}

/* Page */
.main { overflow-y: auto; scrollbar-width: none; padding: 24px 64px 0 25px; }
.page-head { display: flex; align-items: center; gap: 12px; margin-bottom: 20px; }
.square-btn {
  display: flex;
  align-items: center;
  justify-content: center;
  width: 40px;
  height: 40px;
  border: 1px solid #b0b2b8;
  border-radius: 2px;
}
.title { flex: 1; margin-left: 3px; font-size: 24px; font-weight: 400; }
.title-id { color: #7c7d86; }
.primary-btn {
  height: 40px;
  padding: 0 16px;
  border-radius: 2px;
  background: #f7c325;
  color: #3a3010;
  font-size: 15px;
  font-weight: 600;
}
.columns {
  display: grid;
  grid-template-columns: minmax(0, 631fr) minmax(0, 629fr);
  gap: 25px;
  margin: 0 1px;
  align-items: start;
}

/* Route and terms */
.summary { display: grid; grid-template-columns: 320px 1fr; gap: 16px; height: 268px; padding-top: 10px; }
.route { padding-top: 2px; }
.route-stop { display: grid; grid-template-columns: 126px 12px 1fr; gap: 16px; align-items: center; height: 42px; line-height: 21px; }
.route-stop.middle { height: 36px; }
.route-label { text-align: right; font-size: 12px; }
.route-note { font-size: 12px; }
.route-line { width: 2px; height: 56px; margin-left: 147px; background: #f7c325; }
.dot { width: 12px; height: 12px; border-radius: 50%; background: #f7c325; }
.terms { display: flex; flex-direction: column; gap: 12px; line-height: 25px; }

/* Accordion */
.accordion { border: 1px solid #e0e1e4; border-radius: 2px; }
.acc-head {
  display: flex;
  align-items: center;
  justify-content: space-between;
  width: 100%;
  height: 38px;
  padding: 0 27px 0 15px;
  font-size: 16px;
  text-align: left;
}
.specs .acc-head + .acc-head, .ruled { height: 39px; border-top: 1px solid #e0e1e4; }
.services { padding: 7px 31px 13px; line-height: 25px; }
.services div { display: flex; gap: 9px; }

/* Company */
.company { margin: 24px 0; border-radius: 2px; background: #f1f3f2; }
.company-head { display: flex; align-items: center; gap: 14px; height: 85px; padding: 0 14px; border-bottom: 1px solid #b0b5b4; }
.company-title { padding-bottom: 4px; }
.company-mark { font: italic 700 18px "Liberation Serif", serif; fill: #fff; text-anchor: middle; }
.company-name { font-size: 20px; line-height: 28px; font-weight: 600; }
.since { display: flex; align-items: center; gap: 5px; margin: 4px 0 0 1px; font-size: 12px; line-height: 20px; }
.stats { display: grid; grid-template-columns: 1fr 1fr; row-gap: 16px; padding: 14px 16px 18px; }
.stats strong { display: block; font-size: 20px; line-height: 28px; font-weight: 600; }
.stats span { display: flex; align-items: center; gap: 6px; font-size: 12px; line-height: 20px; }
.info circle { fill: #b0b1b8; }
.info path { stroke: #fff; stroke-width: 1.5; }

/* Stops */
.stops { display: grid; grid-template-columns: 97px minmax(0, 1fr); }
.steps { display: flex; flex-direction: column; align-items: center; text-align: center; font-size: 12px; line-height: 18px; }
.steps-count { width: 73px; margin-bottom: 10px; padding: 21px 0 19px; border-bottom: 1px solid #cfd0d3; font-size: 14px; line-height: 20px; }
.step-icon { display: flex; align-items: center; justify-content: center; width: 24px; height: 24px; border-radius: 50%; background: #eaeaea; }
.step-icon.current { background: #f7c325; }
.step-text { margin: 16px 0 9px; }
.step-line { width: 2px; height: 28px; margin-bottom: 8px; background: #e0e1e4; }
.location { display: flex; flex-direction: column; gap: 15px; padding: 8px 15px 16px; line-height: 20px; }

/* Map */
.map { position: sticky; top: 0; height: calc(100vh - 140px); background: #95c5eb; overflow: hidden; }
.map-canvas { width: 100%; height: 100%; background: #f0ede5; }
.map-controls { position: absolute; top: 30px; right: 14px; width: 32px; background: #fff; box-shadow: 0 0 3px rgba(0, 0, 0, .25); }
.map-controls button { display: flex; align-items: center; justify-content: center; width: 32px; height: 32px; }

.water { fill: #95c5eb; }
.land { fill: #f0ede5; }
.park { fill: #e2ebcf; }
.forest { fill: #d2e7b8; }
.town-area { fill: #f5e8d3; }
.town-area.grey { fill: #e6e0df; }
.road, .road-minor, .road-toll, .river, .trail, .border, .border-wide, .border-rail, .bank { fill: none; stroke-linejoin: round; }
.road { stroke: #f3aba6; stroke-width: 4; }
.road-minor { stroke: #e8d8ae; stroke-width: 4; }
.road-toll { stroke: #d8abd3; stroke-width: 4; }
.river { stroke: #95c5eb; stroke-width: 4; }
.trail { stroke: #b9dea0; stroke-width: 4; }
.border { stroke: #8e9090; stroke-width: 3; stroke-dasharray: 15 9; }
.border-wide { stroke: #64819a; stroke-width: 5; stroke-dasharray: 33 18; }
.border-rail { stroke: #64819a; stroke-width: 4; stroke-dasharray: 18 6; }
.bank { stroke: #d2e7b8; stroke-width: 3; }
.shield-blue { fill: #5586c5; }
.shield-red { fill: #ad3d4c; }
.plate-box { fill: #fff; stroke: #77787a; }
.town { fill: #fff; stroke: #4b4b4b; stroke-width: 1; }

.map-canvas text { font-family: Roboto, "Liberation Sans", sans-serif; }
.num-light, .num-dark { font-size: 9px; font-weight: 700; text-anchor: middle; }
.num-light { fill: #fff; }
.num-dark { fill: #47484a; }
.state, .city { paint-order: stroke; stroke: rgba(240, 237, 229, .8); stroke-width: 2px; stroke-linejoin: round; }
.state { font-size: 10px; fill: #a0414f; text-anchor: middle; }
.state .from { text-anchor: start; }
.state .to, .city .to { text-anchor: end; }
.city { font-size: 12px; fill: #4a4a4a; }
.city.dark { font-size: 13px; fill: #543c3a; stroke-opacity: .6; }
.city.major { font-size: 14px; font-weight: 700; fill: #472a28; stroke-opacity: .6; }
.sea { font-size: 9px; fill: #5c8fc4; text-anchor: middle; }
```
